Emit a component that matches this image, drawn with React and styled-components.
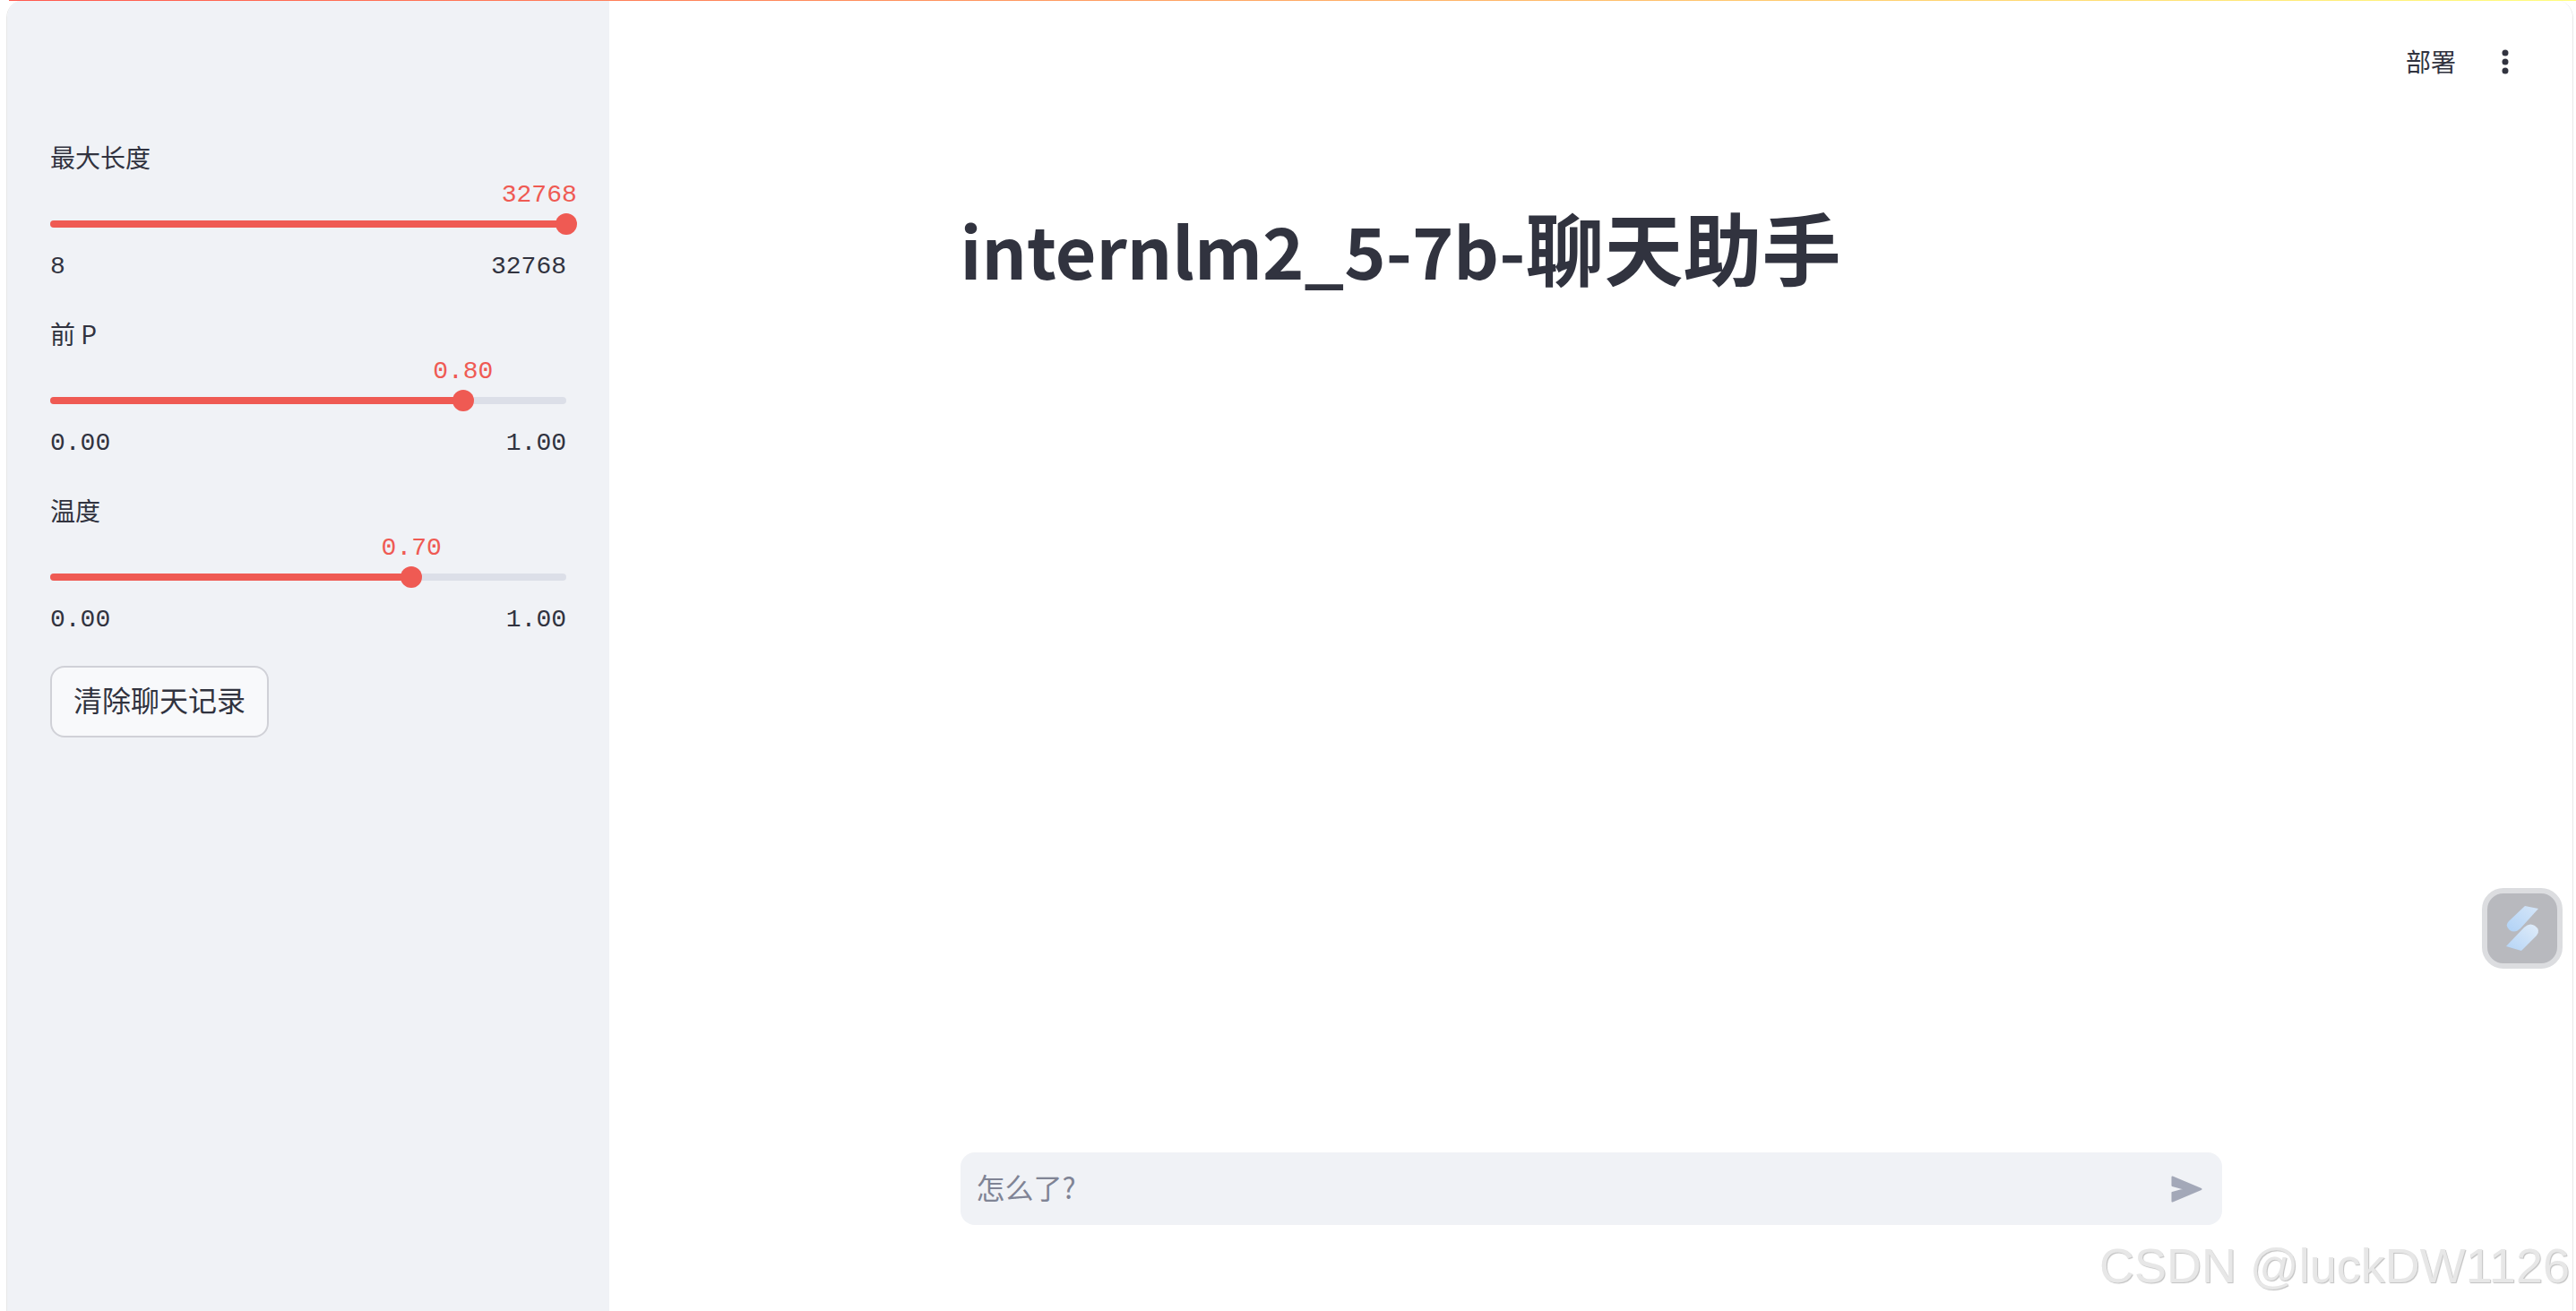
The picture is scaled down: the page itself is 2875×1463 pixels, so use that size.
import React from 'react';
import styled, { createGlobalStyle } from 'styled-components';

const CJK = `"Noto Sans CJK SC", "Noto Sans", sans-serif`;
const MONO = `"Liberation Mono", "Noto Sans CJK SC", monospace`;
const RED = '#ef5a53';
const INK = '#31333f';

const GlobalStyle = createGlobalStyle`
    html, body {
        margin: 0;
        padding: 0;
        background: #fff;
    }

    * {
        box-sizing: border-box;
    }
`;

const Page = styled.div`
    position: relative;
    height: 1463px;
    overflow: hidden;
    padding: 0 3px 0 7px;
    font-family: ${CJK};
    color: ${INK};
`;

const TopLine = styled.div`
    position: absolute;
    top: 0;
    left: 10px;
    right: 0;
    height: 1px;
    background: linear-gradient(90deg, #ff5a4f, #fffd80);
`;

const Window = styled.div`
    display: flex;
    height: 100%;
    border: 1px solid #e8e8e8;
    border-width: 0 1px;
    border-radius: 20px 20px 0 0;
    overflow: hidden;
`;

const Sidebar = styled.aside`
    flex: 0 0 672px;
    padding: 152px 0 0 48px;
    background: #f0f2f6;
`;

const SliderBlock = styled.div`
    width: 576px;
    margin-bottom: 33px;
`;

const Label = styled.div`
    height: 45px;
    padding-top: 3px;
    font-size: 28px;
    line-height: 40px;
`;

const RailArea = styled.div`
    padding: 49px 0 26px;
`;

const Rail = styled.div`
    position: relative;
    height: 8px;
    border-radius: 4px;
    background: #dcdfe8;
`;

const Fill = styled.div`
    height: 100%;
    border-radius: 4px;
    background: ${RED};
`;

const Thumb = styled.div`
    position: absolute;
    top: -8px;
    width: 24px;
    height: 24px;
    margin-left: -12px;
    border-radius: 50%;
    background: ${RED};
`;

const Value = styled.div`
    position: absolute;
    top: -44px;
    font-family: ${MONO};
    font-size: 28px;
    line-height: 32px;
    color: ${RED};
    white-space: nowrap;
    transform: translateX(${props => props.$clamped ? '-86%' : '-50%'});
`;

const Ticks = styled.div`
    display: flex;
    justify-content: space-between;
    font-family: ${MONO};
    font-size: 28px;
    line-height: 36px;
    color: ${INK};
`;

const ClearButton = styled.button`
    display: block;
    height: 80px;
    padding: 0 24px 7px;
    border: 2px solid #d0d1d7;
    border-radius: 16px;
    background: #f8f9fb;
    font-family: ${CJK};
    font-size: 32px;
    color: ${INK};
`;

const Main = styled.main`
    flex: 1;
    min-width: 0;
    display: flex;
    flex-direction: column;
    background: #fff;
`;

const Header = styled.header`
    flex: 0 0 138px;
    display: flex;
    align-items: center;
    justify-content: flex-end;
    gap: 51px;
    padding-right: 71px;
`;

const Deploy = styled.span`
    padding-bottom: 3px;
    font-size: 28px;
    line-height: 40px;
`;

const Column = styled.div`
    flex: 1;
    width: 1408px;
    margin: 0 auto;
    display: flex;
    flex-direction: column;
    padding-bottom: 96px;
`;

const Title = styled.h1`
    margin: 83px 0 0;
    font-size: 88px;
    font-weight: 700;
    line-height: 106px;
    letter-spacing: 0;
`;

const TitleLatin = styled.span`
    font-size: 78.8px;
`;

const ChatInput = styled.div`
    margin-top: auto;
    height: 81px;
    display: flex;
    align-items: center;
    justify-content: space-between;
    padding: 0 22px 0 18px;
    border-radius: 16px;
    background: #f0f2f6;
`;

const Placeholder = styled.span`
    padding-bottom: 5px;
    font-size: 32px;
    line-height: 40px;
    color: #808495;
`;

const Widget = styled.div`
    position: absolute;
    top: 991px;
    left: 2770px;
    width: 90px;
    height: 90px;
    border: 6px solid #dcdde0;
    border-radius: 24px;
    background: #b8b9be;
`;

const Watermark = styled.div`
    position: absolute;
    top: 1381px;
    left: 2343px;
    font-family: "Liberation Sans", Arial, sans-serif;
    font-size: 54px;
    line-height: 62px;
    color: #e7e7e7;
    text-shadow: 1px 1px 1px #c0c0c0;
    white-space: nowrap;
`;

const sliders = [
    { label: '最大长度', value: '32768', pct: 100, min: '8', max: '32768', clamped: true },
    { label: '前 P', value: '0.80', pct: 80, min: '0.00', max: '1.00' },
    { label: '温度', value: '0.70', pct: 70, min: '0.00', max: '1.00' },
];

const Slider = ({ label, value, pct, min, max, clamped }) => (
    <SliderBlock>
        <Label>{label}</Label>
        <RailArea>
            <Rail>
                <Fill style={{ width: `${pct}%` }} />
                <Thumb style={{ left: `${pct}%` }} />
                <Value $clamped={clamped} style={{ left: `${pct}%` }}>{value}</Value>
            </Rail>
        </RailArea>
        <Ticks>
            <span>{min}</span>
            <span>{max}</span>
        </Ticks>
    </SliderBlock>
);

const MoreIcon = () => (
    <svg width="8" height="28" viewBox="0 0 8 28" fill={INK}>
        <circle cx="4" cy="4" r="3.5" />
        <circle cx="4" cy="14" r="3.5" />
        <circle cx="4" cy="24" r="3.5" />
    </svg>
);

const SendIcon = () => (
    <svg width="35" height="30" viewBox="0 0 35 30">
        <path
            d="M1.5 1.5 L33.5 15 L1.5 28.5 V19 L16 15 L1.5 11 Z"
            fill="#a3a8b8"
            stroke="#a3a8b8"
            strokeWidth="2"
            strokeLinejoin="round"
        />
    </svg>
);

const WidgetLogo = () => (
    <svg width="78" height="78" viewBox="6 6 78 78">
        <defs>
            <linearGradient id="logoA" x1="1" y1="0" x2="0" y2="1">
                <stop offset="0" stopColor="#d6e6f8" />
                <stop offset="1" stopColor="#b0d2f6" />
            </linearGradient>
            <linearGradient id="logoB" x1="1" y1="0" x2="0" y2="1">
                <stop offset="0" stopColor="#e0ecf9" />
                <stop offset="1" stopColor="#b4d4f6" />
            </linearGradient>
        </defs>
        <path d="M48 20 L63 23 L43 45 Q37 51 31 47 Q25 42 30 37 Z" fill="url(#logoA)" />
        <path d="M27 65 L47 44 Q53 38 59 42 Q66 47 61 53 L44 70 Z" fill="url(#logoB)" />
    </svg>
);

const App = () => (
    <Page>
        <GlobalStyle />
        <Window>
            <Sidebar>
                {sliders.map(s => <Slider key={s.label} {...s} />)}
                <ClearButton>清除聊天记录</ClearButton>
            </Sidebar>
            <Main>
                <Header>
                    <Deploy>部署</Deploy>
                    <MoreIcon />
                </Header>
                <Column>
                    <Title><TitleLatin>internlm2_5-7b-</TitleLatin>聊天助手</Title>
                    <ChatInput>
                        <Placeholder>怎么了?</Placeholder>
                        <SendIcon />
                    </ChatInput>
                </Column>
            </Main>
        </Window>
        <TopLine />
        <Widget><WidgetLogo /></Widget>
        <Watermark>CSDN @luckDW1126</Watermark>
    </Page>
);

export default App;
